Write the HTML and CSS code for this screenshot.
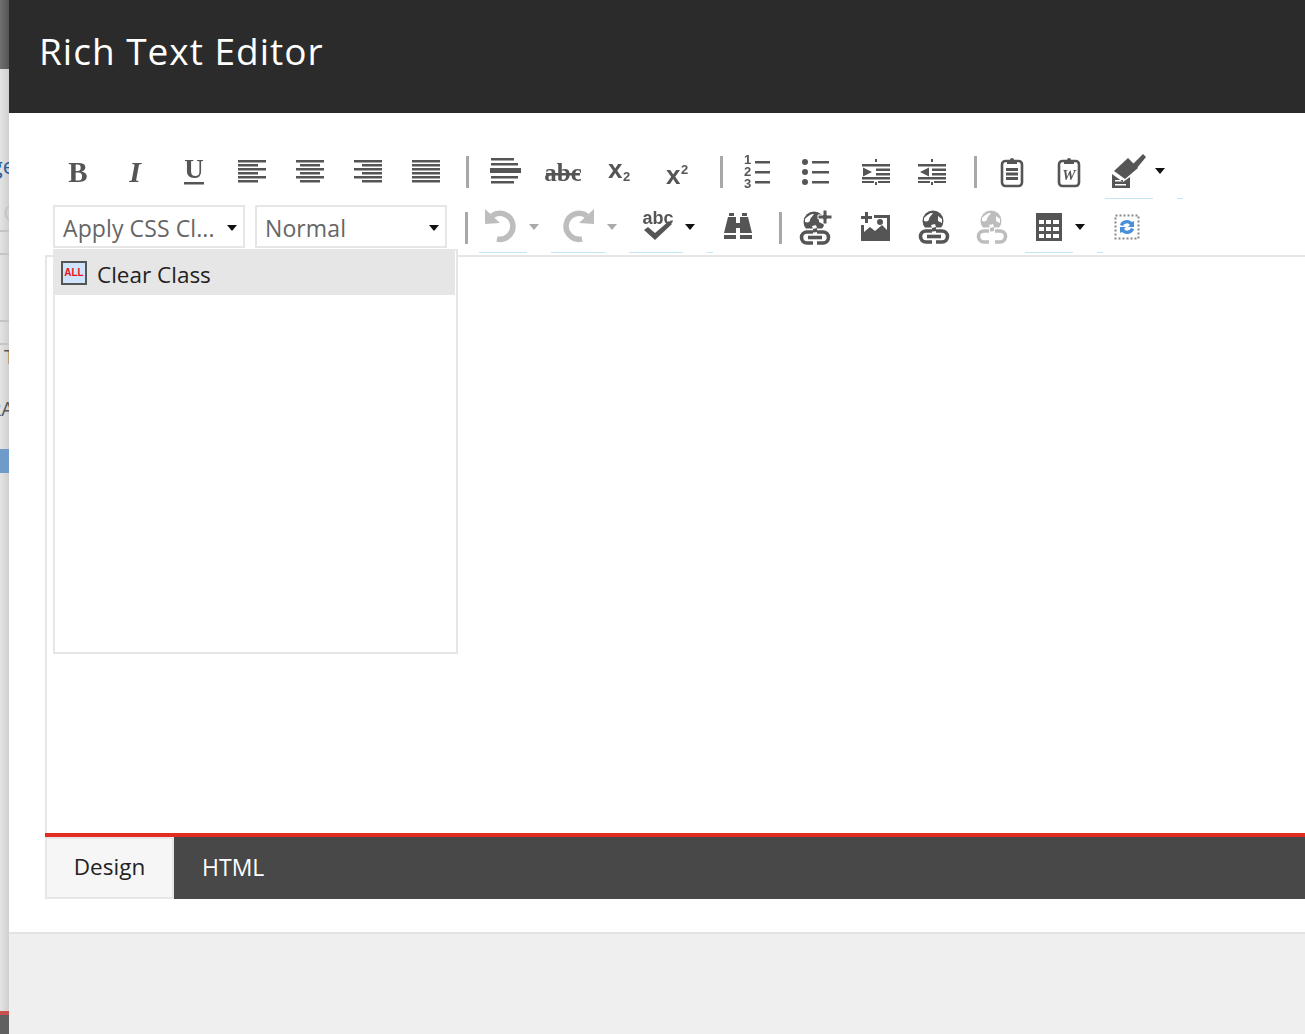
FILE: index.html
```html
<!DOCTYPE html>
<html lang="en">
<head>
  <meta charset="UTF-8">
  <title>Rich Text Editor</title>
  <link rel="stylesheet" href="styles.css">
</head>
<body>
  <svg class="icon-defs" width="0" height="0">
    <symbol id="globe" viewBox="0 0 32 34"><circle cx="15" cy="11" r="10.500"/><path d="M6 8c3-3 5-5 9-5-1 2-4 4-4 6s-2 3-5 2zM20 6l4 3 0 4-4-2zM13 15l4-1 1 3-4 1z" fill="#fff"/></symbol>
    <symbol id="chain" viewBox="0 0 32 34"><path d="M14 21H8a5.500 5.500 0 0 0 0 11h6M18 21h6a5.500 5.500 0 0 1 0 11h-6" fill="#fff" stroke="#fff" stroke-width="7"/><g fill="none" stroke="currentColor" stroke-width="3.600"><path d="M14 21H8a5.500 5.500 0 0 0 0 11h6"/><path d="M18 21h6a5.500 5.500 0 0 1 0 11h-6"/></g><rect x="9" y="24.700" width="14" height="3.600" fill="currentColor"/></symbol>
    <symbol id="chain-plain" viewBox="0 0 32 34"><path d="M14 21H8a5.500 5.500 0 0 0 0 11h6M18 21h6a5.500 5.500 0 0 1 0 11h-6" fill="#fff" stroke="#fff" stroke-width="7"/><g fill="none" stroke="currentColor" stroke-width="3.600"><path d="M13 21H8a5.500 5.500 0 0 0 0 11h5"/><path d="M19 21h5a5.500 5.500 0 0 1 0 11h-5"/></g></symbol>
    <symbol id="undo" viewBox="0 0 36 36"><path d="M9 7a13 13 0 1 1 5 23" fill="none" stroke="currentColor" stroke-width="5.500"/><path d="M2 0v15l15-1z"/></symbol>
    <symbol id="clipboard" viewBox="0 0 32 32"><rect x="6" y="5" width="20" height="25" rx="3.500" fill="none" stroke="currentColor" stroke-width="2.600"/><path d="M11 8V4h3a2 2 0 0 1 4 0h3v4z"/></symbol>
    <symbol id="caret-list" viewBox="0 0 32 32"><path d="M15 3h2v3h-2zM15 26h2v3h-2zM2 8h28v2.500H2zM16 12.500h14V15H16zM16 17h14v2.500H16zM2 21h28v2.500H2zM2 25h12v2H2zM18 25h12v2H18z"/></symbol>
  </svg>

  <div class="page">
    <div class="backdrop">
      <div class="backdrop-top"></div>
      <div class="backdrop-text backdrop-link">ge</div>
      <div class="backdrop-text backdrop-muted">C</div>
      <div class="backdrop-rule backdrop-rule-a"></div>
      <div class="backdrop-rule backdrop-rule-b"></div>
      <div class="backdrop-rule backdrop-rule-c"></div>
      <div class="backdrop-rule backdrop-rule-d"></div>
      <div class="backdrop-text backdrop-t">T</div>
      <div class="backdrop-text backdrop-r">RA</div>
      <div class="backdrop-chip"></div>
      <div class="backdrop-fill"></div>
      <div class="backdrop-red"></div>
      <div class="backdrop-bottom"></div>
    </div>

    <div class="dialog">
      <div class="dialog-header">
        <h1>Rich Text Editor</h1>
      </div>

      <div class="dialog-body">
        <div class="toolbar toolbar-top">
          <div class="tool"><svg class="icon" width="32" height="32"><text x="16" y="26" text-anchor="middle" class="glyph-b">B</text></svg></div>
          <div class="tool"><svg class="icon" width="32" height="32"><text x="15" y="26" text-anchor="middle" class="glyph-i">I</text></svg></div>
          <div class="tool"><svg class="icon" width="32" height="32"><text x="16" y="22" text-anchor="middle" class="glyph-u">U</text><rect x="6" y="26" width="20" height="2.500"/></svg></div>
          <div class="tool"><svg class="icon" width="32" height="32" viewBox="0 0 32 32"><path d="M2 4h28v2.500H2zM2 8h20v2.500H2zM2 12h28v2.500H2zM2 16h20v2.500H2zM2 20h28v2.500H2zM2 24h20v2.500H2z"/></svg></div>
          <div class="tool"><svg class="icon" width="32" height="32" viewBox="0 0 32 32"><path d="M2 4h28v2.500H2zM6 8h20v2.500H6zM2 12h28v2.500H2zM6 16h20v2.500H6zM2 20h28v2.500H2zM6 24h20v2.500H6z"/></svg></div>
          <div class="tool"><svg class="icon" width="32" height="32" viewBox="0 0 32 32"><path d="M2 4h28v2.500H2zM10 8h20v2.500H10zM2 12h28v2.500H2zM10 16h20v2.500H10zM2 20h28v2.500H2zM10 24h20v2.500H10z"/></svg></div>
          <div class="tool"><svg class="icon" width="32" height="32" viewBox="0 0 32 32"><path d="M2 4h28v2.500H2zM2 8h28v2.500H2zM2 12h28v2.500H2zM2 16h28v2.500H2zM2 20h28v2.500H2zM2 24h28v2.500H2z"/></svg></div>
          <div class="sep sep-a"></div>
          <div class="tool"><svg class="icon" width="32" height="32" viewBox="0 0 32 32"><path d="M2 2h23v2.500H2zM2 7h27v2.500H2zM1 12h31v5H1zM2 20h27v2.500H2zM2 25h23v2.500H2z"/></svg></div>
          <div class="tool"><svg class="icon" width="36" height="32"><text x="18" y="25" text-anchor="middle" class="glyph-abc">abc</text><rect x="1" y="17" width="34" height="2.500"/></svg></div>
          <div class="tool"><svg class="icon" width="32" height="32"><text x="3" y="22" class="glyph-x">x</text><text x="18" y="25" class="glyph-sub">2</text></svg></div>
          <div class="tool"><svg class="icon" width="32" height="32"><text x="3" y="28" class="glyph-x">x</text><text x="18" y="18" class="glyph-sub">2</text></svg></div>
          <div class="sep sep-b"></div>
          <div class="tool"><svg class="icon" width="32" height="36"><text x="2" y="10" class="glyph-num">1</text><text x="2" y="22" class="glyph-num">2</text><text x="2" y="34" class="glyph-num">3</text><rect x="13" y="7" width="15" height="2.500"/><rect x="13" y="17" width="15" height="2.500"/><rect x="13" y="27" width="15" height="2.500"/></svg></div>
          <div class="tool"><svg class="icon" width="32" height="32" viewBox="0 0 32 32"><circle cx="5" cy="6" r="3"/><circle cx="5" cy="16" r="3"/><circle cx="5" cy="26" r="3"/><path d="M12 5h17v2.500H12zM12 15h17v2.500H12zM12 25h17v2.500H12z"/></svg></div>
          <div class="tool tool-indent"><svg class="icon" width="32" height="32" viewBox="0 0 32 32"><use href="#caret-list"/><path d="M3 11.500l9 4.500-9 4.500z"/></svg></div>
          <div class="tool tool-narrow"><svg class="icon" width="32" height="32" viewBox="0 0 32 32"><use href="#caret-list"/><path d="M13 11.500L4 16l9 4.500z"/></svg></div>
          <div class="sep sep-c"></div>
          <div class="tool"><svg class="icon" width="32" height="34" viewBox="0 0 32 32"><use href="#clipboard"/><path d="M10 12h12v3H10zM10 16.500h12v3H10zM10 21h12v3H10z"/></svg></div>
          <div class="tool tool-narrow"><svg class="icon" width="32" height="34" viewBox="0 0 32 32"><use href="#clipboard"/><text x="16" y="24" text-anchor="middle" class="glyph-w">W</text></svg></div>
          <div class="split split-brush">
            <div class="split-main"><svg class="icon" width="36" height="36" viewBox="0 0 36 36"><path d="M1 21l11 8 7-5v11H1zM4 27v1.500h8V27zM4 31v1.500h11V31z" fill-rule="evenodd"/><path d="M3 18L17 5l10 10-13 11z"/><path d="M22 11l10-10 3 3-9 11z"/></svg></div>
            <div class="split-arrow"><span class="caret"></span></div>
            <div class="split-stub"></div>
          </div>
        </div>

        <div class="toolbar toolbar-bottom">
          <div class="select"><span class="select-label">Apply CSS Cl...</span><span class="caret"></span></div>
          <div class="select select-second"><span class="select-label">Normal</span><span class="caret"></span></div>
          <div class="sep sep-d"></div>
          <div class="split split-undo">
            <div class="split-main is-disabled"><svg class="icon icon-undo" width="36" height="36"><use href="#undo"/></svg></div>
            <div class="split-arrow"><span class="caret caret-off"></span></div>
          </div>
          <div class="split split-redo">
            <div class="split-main is-disabled"><svg class="icon icon-flip" width="36" height="36"><use href="#undo"/></svg></div>
            <div class="split-arrow"><span class="caret caret-off"></span></div>
          </div>
          <div class="split split-spell">
            <div class="split-main"><svg class="icon icon-spell" width="36" height="36"><text x="18" y="15" text-anchor="middle" class="glyph-spell">abc</text><path d="M4 21l4-3 7 6 14-12 3 3-17 16z"/></svg></div>
            <div class="split-arrow"><span class="caret"></span></div>
            <div class="split-stub"></div>
          </div>
          <div class="tool tool-find"><svg class="icon" width="32" height="32" viewBox="0 0 32 32"><path d="M7 2h5v3H7zM20 2h5v3h-5zM6 6h8v6h4V6h8l4 16H18v-5h-4v5H2zM2 24h12v4H2zM18 24h12v4H18z"/></svg></div>
          <div class="sep sep-e"></div>
          <div class="tool"><svg class="icon" width="36" height="36" viewBox="0 0 36 36"><svg width="32" height="34" y="2"><use href="#globe"/><use href="#chain"/></svg><path d="M24 1h4v5h5v4h-5v5h-4v-5h-5V6h5z" stroke="#fff" stroke-width="1"/></svg></div>
          <div class="tool"><svg class="icon" width="32" height="32" viewBox="0 0 32 32"><path d="M6 1h3v4h4v3H9v4H6V8H2V5h4zM15 4h16v26H2V14h3v7l6-5 5 4 7-6 5 5V7H15z"/><circle cx="21" cy="11" r="3"/></svg></div>
          <div class="tool tool-web"><svg class="icon" width="32" height="34" viewBox="0 0 32 34"><use href="#globe"/><use href="#chain"/></svg></div>
          <div class="tool is-disabled"><svg class="icon" width="32" height="34" viewBox="0 0 32 34"><use href="#globe"/><use href="#chain-plain"/></svg></div>
          <div class="split split-table">
            <div class="split-main"><svg class="icon" width="28" height="30" viewBox="0 0 28 30"><path d="M1 1h26v28H1zM4 8v4h5V8zm7 0v4h5V8zm7 0v4h6V8zM4 15v4h5v-4zm7 0v4h5v-4zm7 0v4h6v-4zM4 22v4h5v-4zm7 0v4h5v-4zm7 0v4h6v-4z" fill-rule="evenodd"/></svg></div>
            <div class="split-arrow"><span class="caret"></span></div>
            <div class="split-stub"></div>
          </div>
          <div class="tool tool-last"><svg class="icon-plain" width="26" height="26" viewBox="0 0 26 26"><rect x="1.500" y="1.500" width="23" height="23" fill="none" stroke="#888" stroke-width="2" stroke-dasharray="2 2"/><path d="M6 11a7 6 0 0 1 12-3l2-1v6h-6l2-2a4 4 0 0 0-7 1zM20 15a7 6 0 0 1-12 3l-2 1v-6h6l-2 2a4 4 0 0 0 7-1z" fill="#4a90d9"/></svg></div>
        </div>

        <div class="editor">
          <div class="class-menu">
            <div class="class-item">
              <span class="class-item-icon">ALL</span>
              <span>Clear Class</span>
            </div>
          </div>
          <div class="editor-area"></div>
          <div class="editor-tabs">
            <div class="tab tab-active">Design</div>
            <div class="tab">HTML</div>
          </div>
        </div>
      </div>

      <div class="dialog-footer"></div>
    </div>
  </div>
</body>
</html>
```

FILE: styles.css
```css
* {
  margin: 0;
  padding: 0;
  box-sizing: border-box;
}

html, body {
  height: 100%;
  overflow: hidden;
}

body {
  font-family: "Open Sans", "Noto Sans", sans-serif;
  background: #efefef;
  color: #222;
}

.icon-defs {
  display: block;
  height: 0;
}

.page {
  display: flex;
  height: 1034px;
}

/* sliver of the page behind the dialog */
.backdrop {
  flex: 0 0 9px;
  display: flex;
  flex-direction: column;
  background: linear-gradient(90deg, #e4e4e4, #cfcfcf);
  overflow: hidden;
}

.backdrop-top {
  height: 69px;
  flex: none;
  background: linear-gradient(90deg, #707070, #555);
}

.backdrop-text {
  display: flex;
  justify-content: flex-end;
  flex: none;
  white-space: nowrap;
  font-size: 22px;
  height: 30px;
  line-height: 30px;
}

.backdrop-link {
  margin-top: 81px;
  color: #2a5c9a;
  margin-right: -6px;
}

.backdrop-muted {
  margin-top: 17px;
  color: #c4c4c4;
  margin-right: -8px;
}

.backdrop-rule {
  flex: none;
  height: 2px;
  background: #c4c4c4;
}

.backdrop-rule-a {
  margin-top: 3px;
}

.backdrop-rule-b {
  margin-top: 21px;
}

.backdrop-rule-c {
  margin-top: 65px;
}

.backdrop-rule-d {
  margin-top: 21px;
}

.backdrop-t {
  color: #555;
  margin-right: -6px;
  font-size: 20px;
  height: 24px;
  line-height: 24px;
}

.backdrop-r {
  margin-top: 27px;
  color: #555;
  margin-right: -5px;
  font-size: 20px;
  height: 26px;
  line-height: 26px;
}

.backdrop-chip {
  flex: none;
  height: 24px;
  margin-top: 27px;
  background: #6f9bc9;
}

.backdrop-fill {
  flex: 1;
}

.backdrop-red {
  flex: none;
  height: 4px;
  background: #c85050;
}

.backdrop-bottom {
  flex: none;
  height: 19px;
  background: #606060;
}

.dialog {
  flex: 1;
  min-width: 0;
  display: flex;
  flex-direction: column;
}

.dialog-header {
  flex: none;
  height: 113px;
  padding: 26px 0 0 30px;
  background: #2b2b2b;
}

.dialog-header h1 {
  font-size: 37px;
  font-weight: 400;
  letter-spacing: 1px;
  line-height: 50px;
  color: #fff;
}

.dialog-body {
  flex: none;
  height: 819px;
  padding: 35px 0 0 40px;
  background: #fff;
}

.dialog-footer {
  flex: 1;
  border-top: 2px solid #e3e3e3;
  background: #efefef;
}

.toolbar {
  display: flex;
  align-items: stretch;
}

.toolbar-top {
  height: 51px;
}

.toolbar-bottom {
  height: 48px;
  margin-top: 6px;
  padding-left: 4px;
}

.tool {
  flex: 0 0 58px;
  display: flex;
  align-items: center;
  justify-content: center;
  padding-bottom: 4px;
}

.tool-narrow {
  flex-basis: 56px;
}

.tool-indent {
  flex-basis: 56px;
  margin-left: 3px;
}

.tool-find {
  flex-basis: 50px;
}

.tool-web {
  margin-left: 1px;
}

.tool-last {
  flex-basis: 48px;
}

.icon {
  display: block;
  fill: currentColor;
  color: #555;
  filter: blur(0.6px);
}

.icon-flip {
  transform: scaleX(-1);
}

.icon-undo {
  margin-left: -4px;
}

.icon-spell {
  margin-left: 4px;
}

.is-disabled .icon {
  color: #bdbdbd;
}

.sep {
  flex: 0 0 3px;
  background: #a8a8a8;
  align-self: center;
  height: 32px;
  margin-bottom: 3px;
}

.sep-a {
  margin-left: 11px;
  margin-right: 7px;
}

.sep-b {
  margin-left: 12px;
  margin-right: 6px;
}

.sep-c {
  margin-left: 14px;
  margin-right: 6px;
}

.sep-d {
  margin-left: 18px;
  margin-right: 11px;
}

.sep-e {
  margin-left: 16px;
  margin-right: 6px;
}

.glyph-b, .glyph-i, .glyph-u, .glyph-abc {
  font-family: "Liberation Serif", serif;
  font-weight: 700;
}

.glyph-b {
  font-size: 29px;
}

.glyph-i {
  font-size: 30px;
  font-style: italic;
}

.glyph-u {
  font-size: 27px;
}

.glyph-abc {
  font-size: 25px;
}

.glyph-x {
  font-family: "Liberation Sans", sans-serif;
  font-weight: 700;
  font-size: 26px;
}

.glyph-sub {
  font-family: "Liberation Sans", sans-serif;
  font-weight: 700;
  font-size: 13px;
}

.glyph-num {
  font-family: "Liberation Sans", sans-serif;
  font-weight: 700;
  font-size: 13px;
}

.glyph-w {
  font-family: "Liberation Serif", serif;
  font-weight: 700;
  font-style: italic;
  font-size: 15px;
}

.glyph-spell {
  font-family: "Liberation Sans", sans-serif;
  font-weight: 700;
  font-size: 18px;
}

.split {
  display: flex;
}

.split-main {
  display: flex;
  align-items: center;
  justify-content: center;
  width: 48px;
  padding-bottom: 4px;
  border-bottom: 1px solid #c3e6f6;
}

.split-arrow {
  display: flex;
  align-items: center;
  width: 24px;
  padding: 0 0 5px 2px;
}

.split-stub {
  width: 6px;
  border-bottom: 1px solid #c3e6f6;
}

.split-brush {
  margin-left: 8px;
}

.split-redo .split-main,
.split-spell .split-main {
  width: 54px;
}

.split-table {
  margin-left: 4px;
}

.caret {
  display: block;
  width: 0;
  height: 0;
  border-left: 5px solid transparent;
  border-right: 5px solid transparent;
  border-top: 6px solid #111;
}

.caret-off {
  border-top-color: #aaa;
}

.select {
  flex: 0 0 192px;
  height: 43px;
  display: flex;
  align-items: center;
  justify-content: space-between;
  padding: 2px 6px 0 8px;
  border: 2px solid #e6e6e6;
  font-size: 23px;
  letter-spacing: 0.1px;
  color: #666;
}

.select-second {
  margin-left: 10px;
}

.select-label {
  white-space: nowrap;
}

.editor {
  position: relative;
  margin-top: 2px;
  height: 644px;
  display: flex;
  flex-direction: column;
  border-top: 2px solid #e6e6e6;
  border-left: 2px solid #e6e6e6;
  margin-left: -4px;
}

.editor-area {
  flex: 1;
  background: #fff;
}

.editor-tabs {
  flex: none;
  height: 66px;
  margin-left: -2px;
  display: flex;
  background: #484848;
  border-top: 4px solid #e12c1f;
}

.tab {
  padding: 0 28px;
  line-height: 60px;
  font-size: 23px;
  color: #fff;
}

.tab-active {
  width: 129px;
  padding: 0;
  text-align: center;
  line-height: 56px;
  font-size: 22.500px;
  background: #f6f6f6;
  border: 2px solid #e6e6e6;
  color: #222;
}

/* open dropdown, hangs over the editor */
.class-menu {
  position: absolute;
  left: 6px;
  top: -8px;
  width: 405px;
  height: 405px;
  background: #fff;
  border: 2px solid #e6e6e6;
}

.class-item {
  display: flex;
  align-items: center;
  gap: 10px;
  height: 44px;
  width: 400px;
  padding: 2px 0 0 6px;
  background: #e6e6e6;
  font-size: 22.500px;
  color: #222;
}

.class-item-icon {
  flex: none;
  width: 26px;
  height: 24px;
  margin-top: -2px;
  border: 2px solid #555;
  background: #cfe3fb;
  color: #f01020;
  font-family: "Liberation Sans", sans-serif;
  font-size: 10px;
  font-weight: 700;
  line-height: 20px;
  text-align: center;
}
```
